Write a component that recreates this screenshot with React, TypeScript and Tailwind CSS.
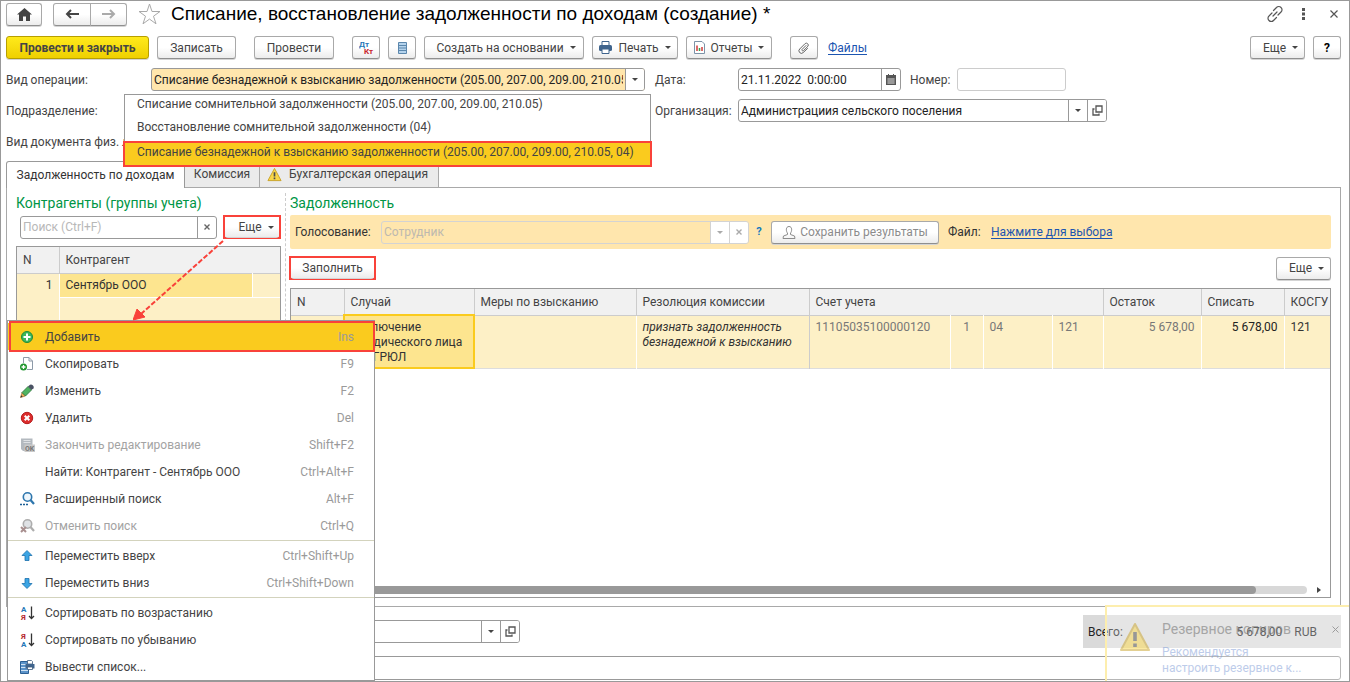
import type { ReactNode } from 'react'

const menuGroups = [
  [
    { icon: 'add', label: 'Добавить', keys: 'Ins', active: true },
    { icon: 'copy', label: 'Скопировать', keys: 'F9' },
    { icon: 'edit', label: 'Изменить', keys: 'F2' },
    { icon: 'delete', label: 'Удалить', keys: 'Del' },
    { icon: 'finish', label: 'Закончить редактирование', keys: 'Shift+F2', disabled: true },
    { icon: '', label: 'Найти: Контрагент - Сентябрь ООО', keys: 'Ctrl+Alt+F' },
    { icon: 'search', label: 'Расширенный поиск', keys: 'Alt+F' },
    { icon: 'cancel', label: 'Отменить поиск', keys: 'Ctrl+Q', disabled: true }
  ],
  [
    { icon: 'up', label: 'Переместить вверх', keys: 'Ctrl+Shift+Up' },
    { icon: 'down', label: 'Переместить вниз', keys: 'Ctrl+Shift+Down' }
  ],
  [
    { icon: 'asc', label: 'Сортировать по возрастанию', keys: '' },
    { icon: 'desc', label: 'Сортировать по убыванию', keys: '' },
    { icon: 'print', label: 'Вывести список...', keys: '' }
  ]
]

const arrowUp = 'M8 2.5 13 7.500h-3v5h-4V7.500H3z'

function MenuIcon({ name }: { name: string }) {
  return (
    <svg width="16" height="16" viewBox="0 0 16 16" fill="none" className="shrink-0">
      {name === 'add' && (
        <>
          <circle cx="8" cy="8" r="5.500" fill="#3cb85c" stroke="#1f8a3a" />
          <path d="M8 4.500v7M4.500 8h7" stroke="#fff" strokeWidth="2" />
        </>
      )}
      {name === 'copy' && (
        <>
          <path d="M4.500 7V1.500h5.500L13.500 5v8.500H8" fill="#fff" stroke="#8d9aa8" />
          <path d="M10 1.500V5h3.500" stroke="#8d9aa8" />
          <circle cx="4.500" cy="11" r="3.500" fill="#21962f" />
          <path d="M4.500 9v4M2.500 11h4" stroke="#fff" strokeWidth="1.300" />
        </>
      )}
      {name === 'edit' && (
        <>
          <path d="M1.500 14.500 3 9.500l3.500 3.500z" fill="#efab55" stroke="#8f5a23" strokeWidth=".6" />
          <path d="M3 9.500 9 3.500l3.500 3.500-6 6z" fill="#4fb360" stroke="#2c6e3a" strokeWidth=".8" />
          <path d="M9 3.500 11 1.700q1.500-.7 3 .8t.5 2.700l-2 1.800z" fill="#4a5263" />
          <path d="M1.500 14.500l.7-2.200 1.500 1.500z" fill="#333" />
        </>
      )}
      {name === 'delete' && (
        <>
          <circle cx="8" cy="8" r="5.700" fill="#dc2c2c" stroke="#b51d1d" />
          <path d="M5.700 5.700l4.600 4.600M10.300 5.700l-4.600 4.600" stroke="#fff" strokeWidth="2" />
        </>
      )}
      {name === 'finish' && (
        <>
          <path d="M2 1.500h11.500V14H4L2 12z" fill="#b3b9bf" />
          <path d="M4.500 3.500h7M4.500 5.500h7" stroke="#dfe2e5" />
          <path d="M5.500 7.500H16V15H5.500z" fill="#c9c9c9" />
          <text x="6" y="14" fontSize="7" fontWeight="700" fill="#777">OK</text>
        </>
      )}
      {name === 'search' && (
        <>
          <circle cx="8.500" cy="6" r="4.200" fill="#eef6fc" stroke="#2d76ad" strokeWidth="1.600" />
          <path d="M11.500 9l3.500 4" stroke="#2d76ad" strokeWidth="2.200" />
          <path d="M1 13.500h8" stroke="#1d5f96" strokeWidth="1.600" strokeDasharray="2 1" />
        </>
      )}
      {name === 'cancel' && (
        <>
          <circle cx="8.500" cy="6" r="4.200" fill="#dfe2e5" stroke="#adadad" strokeWidth="1.600" />
          <path d="M11.500 9l3.500 4" stroke="#adadad" strokeWidth="2.200" />
          <path d="M2 9l5 5M7 9l-5 5" stroke="#a88f8f" strokeWidth="2" />
        </>
      )}
      {name === 'up' && <path d={arrowUp} fill="#3ca5e4" stroke="#1b70ad" strokeWidth=".8" />}
      {name === 'down' && <path d={arrowUp} transform="rotate(180 8 8)" fill="#3ca5e4" stroke="#1b70ad" strokeWidth=".8" />}
      {(name === 'asc' || name === 'desc') && (
        <>
          <text x="2" y="7" fontSize="8" fontWeight="700" fill={name === 'asc' ? '#2777b8' : '#b5292f'}>{name === 'asc' ? 'А' : 'Я'}</text>
          <text x="2" y="15" fontSize="8" fontWeight="700" fill={name === 'asc' ? '#b5292f' : '#2777b8'}>{name === 'asc' ? 'Я' : 'А'}</text>
          <path d="M12.500 1.500v12M10 11l2.500 2.500L15 11" stroke="#333" strokeWidth="1.300" />
        </>
      )}
      {name === 'print' && (
        <>
          <path d="M1.500 2.500h8v12h-8z" fill="#5b93c9" stroke="#2b5f94" />
          <path d="M2 5.500h7M2 8.500h7M2 11.500h7" stroke="#cfe2f3" />
          <path d="M8.500 1.500h4l1 1V5h-5z" fill="#fff" stroke="#3c5a7c" strokeWidth=".8" />
          <path d="M6.500 5h9v4.500h-9z" fill="#3f648d" />
          <path d="M8.500 8h5v2.500h-5z" fill="#fff" stroke="#3c5a7c" strokeWidth=".8" />
        </>
      )}
    </svg>
  )
}

function Caret() {
  return <span className="h-0 w-0 shrink-0 border-x-[3px] border-t-[3px] border-x-transparent border-t-current" />
}

function OpenIcon() {
  return (
    <svg width="11" height="11" viewBox="0 0 11 11" fill="none" stroke="#555" strokeWidth="1.300">
      <path d="M4 1h6v6H4z" />
      <path d="M2.500 4H1v6h6V8.500" />
    </svg>
  )
}

function Warning({ size }: { size: number }) {
  return (
    <svg width={size} height={size} viewBox="0 0 16 16" className="shrink-0">
      <path d="M8 1.500 15 14.500H1z" fill="#f9d648" stroke="#c9a227" strokeLinejoin="round" />
      <path d="M8 5.500v4.500M8 11.300v1.700" stroke="#4b4b4b" strokeWidth="1.800" />
    </svg>
  )
}

function Btn({ children, className = '', label }: { children: ReactNode; className?: string; label?: string }) {
  return (
    <button
      aria-label={label}
      className={`flex h-[23px] shrink-0 items-center justify-center rounded-[3px] border border-[#a9a9a9] border-b-[#8f8f8f] bg-gradient-to-b from-white from-50% to-[#ececec] whitespace-nowrap shadow-[0_1px_0_#d4d4d4] ${className}`}
    >
      {children}
    </button>
  )
}

function Combo({ id, value = '', label, open, className = '' }: { id?: string; value?: string; label?: string; open?: boolean; className?: string }) {
  return (
    <div className={`flex h-[23px] overflow-hidden rounded-[3px] border border-[#999] ${className}`}>
      <select id={id} aria-label={label} className="min-w-0 flex-1 appearance-none bg-transparent px-[2px] text-[#222]">
        <option>{value}</option>
      </select>
      <span className="flex w-[19px] items-center justify-center border-l border-[#999] bg-white text-[#444]"><Caret /></span>
      {open && (
        <button aria-label="Открыть" className="flex w-[19px] items-center justify-center border-l border-[#999] bg-white">
          <OpenIcon />
        </button>
      )}
    </div>
  )
}

function ContextMenu() {
  return (
    <div role="menu" className="absolute -left-[10px] top-[73px] z-20 w-[368px] border border-[#999] bg-white pt-[2px]">
      {menuGroups.map((group, i) => (
        <div key={i} className={i > 0 ? 'mt-px border-t border-[#d3d3bd] pt-px' : ''}>
          {group.map((item) => (
            <button
              key={item.label}
              role="menuitem"
              className={`relative flex h-[27px] w-full items-center pr-5 pl-[11px] text-left whitespace-nowrap ${item.active ? 'bg-[#facb1e]' : ''} ${item.disabled ? 'text-[#a3a3a3]' : 'text-[#444]'}`}
            >
              {item.active && <span className="absolute -inset-y-[2px] left-px -right-px border-2 border-[#f9423a]" />}
              <MenuIcon name={item.icon} />
              <span className="ml-[10px] flex-1">{item.label}</span>
              <span className="text-[#9a9a9a]">{item.keys}</span>
            </button>
          ))}
        </div>
      ))}
    </div>
  )
}

function OperationList() {
  return (
    <ul className="absolute -left-[27px] top-[26px] z-20 h-[72px] w-[527px] border border-[#999] bg-white whitespace-nowrap text-[#444]">
      <li className="h-[23px] pl-3 leading-[19px]">Списание сомнительной задолженности (205.00, 207.00, 209.00, 210.05)</li>
      <li className="h-[23px] pl-3 leading-[19px]">Восстановление сомнительной задолженности (04)</li>
      <li className="-mx-[2px] h-[26px] border-2 border-[#f9423a] bg-[#facb1e] pl-3 leading-[19px]">
        Списание безнадежной к взысканию задолженности (205.00, 207.00, 209.00, 210.05, 04)
      </li>
    </ul>
  )
}

function TitleBar() {
  return (
    <div className="flex h-6 items-center">
      <Btn label="Домой" className="w-9">
        <svg width="15" height="13" viewBox="0 0 15 13" fill="#444"><path d="M7.500 0 15 6.500h-2V13H9V8.500H6V13H2V6.500H0z" /></svg>
      </Btn>
      <div className="ml-[11px] flex">
        <Btn label="Назад" className="w-[38px] rounded-r-none">
          <svg width="14" height="10" viewBox="0 0 14 10" fill="none" stroke="#444" strokeWidth="2"><path d="M14 5H2M6 1 2 5l4 4" /></svg>
        </Btn>
        <Btn label="Вперед" className="-ml-px w-[37px] rounded-l-none">
          <svg width="14" height="10" viewBox="0 0 14 10" fill="none" stroke="#aaa" strokeWidth="2"><path d="M0 5h12M8 1l4 4-4 4" /></svg>
        </Btn>
      </div>
      <button aria-label="В избранное" className="ml-[11px]">
        <svg width="23" height="22" viewBox="0 0 23 22" fill="#fff" stroke="#a9a9a9"><path d="M11.500 1 14 8.500h8l-6.500 4.700 2.500 7.600-6.500-4.700L5 20.800l2.500-7.600L1 8.500h8z" /></svg>
      </button>
      <h1 className="ml-[10px] flex-1 font-['Liberation_Sans',Arial,sans-serif] text-[19px] whitespace-nowrap text-black">Списание, восстановление задолженности по доходам (создание) *</h1>
      <button aria-label="Ссылка">
        <svg width="18" height="18" viewBox="0 0 18 18" fill="none" stroke="#555" strokeWidth="1.200" strokeLinecap="round">
          <path d="M7.500 5.500 10.500 2.500a3 3 0 0 1 4.500 0 3 3 0 0 1 0 4.500l-3 3M10.500 12.500l-3 3a3 3 0 0 1-4.500 0 3 3 0 0 1 0-4.500l3-3M7 11l4-4" />
        </svg>
      </button>
      <button aria-label="Меню" className="ml-[18px] w-[7px]">
        <svg width="4" height="12" viewBox="0 0 4 12" fill="#555"><path d="M0 0h3v3H0zM0 4.500h3v3H0zM0 9h3v3H0z" /></svg>
      </button>
      <button aria-label="Закрыть" className="mr-[3px] ml-[21px]">
        <svg width="8" height="8" viewBox="0 0 8 8" stroke="#555" strokeWidth="1.200"><path d="M.5.5l7 7M7.500.5l-7 7" /></svg>
      </button>
    </div>
  )
}

function Toolbar() {
  return (
    <div className="mt-[10px] flex items-center gap-2">
      <button className="h-[23px] w-[143px] shrink-0 rounded-[3px] border border-[#b79f00] bg-gradient-to-b from-[#ffea1a] to-[#efd000] font-bold whitespace-nowrap text-[#444] shadow-[0_1px_0_#d4d4d4]">
        Провести и закрыть
      </button>
      <Btn className="w-[79px]">Записать</Btn>
      <Btn className="ml-[10px] w-[80px]">Провести</Btn>
      <Btn label="Дебет и кредит" className="ml-[10px] w-7">
        <svg width="15" height="16" viewBox="0 0 15 16" fontSize="8" fontWeight="700">
          <text x="0" y="7" fill="#2777b8">Дт</text>
          <text x="5" y="14" fill="#c8232c">Кт</text>
        </svg>
      </Btn>
      <Btn label="Список" className="w-7">
        <svg width="9" height="12" viewBox="0 0 9 12" fill="#b5d3ec" stroke="#5b87ad"><path d="M.5.5h8v11h-8zM1 3.500h7M1 6h7M1 8.500h7" /></svg>
      </Btn>
      <Btn className="w-40 gap-[6px] pl-1">Создать на основании <Caret /></Btn>
      <Btn className="w-[86px] gap-[6px]">
        <svg width="13" height="13" viewBox="0 0 13 13" fill="#3f648d"><path d="M3 .5h7v4H3z" fill="#fff" stroke="#3f648d" /><rect y="4" width="13" height="6" rx="1.500" /><path d="M3 8h7v4.500H3z" fill="#fff" stroke="#3f648d" /></svg>
        Печать <Caret />
      </Btn>
      <Btn className="w-[86px] gap-[6px]">
        <svg width="11" height="13" viewBox="0 0 11 13" fill="none"><path d="M.5.5H8L10.500 3v9.500H.5z" fill="#fff" stroke="#7d93a8" /><path d="M3 10V4.500M8 10V6" stroke="#d23b3b" strokeWidth="1.500" /><path d="M5.500 10V7" stroke="#38a04b" strokeWidth="1.500" /></svg>
        Отчеты <Caret />
      </Btn>
      <Btn label="Вложения" className="ml-[10px] w-7">
        <svg width="12" height="12" viewBox="0 0 12 12" fill="none" stroke="#666" strokeLinecap="round"><path d="M8 3.500 4 7.500a1 1 0 0 0 1.300 1.300L10 4.200A2 2 0 0 0 7.200 1.500L1.700 7a2.500 2.500 0 0 0 3.500 3.600L9.500 6.500" /></svg>
      </Btn>
      <a href="#" className="ml-[2px] text-[#1c55b0] underline underline-offset-2">Файлы</a>
      <Btn className="ml-auto w-[55px] gap-[6px] pl-[6px]">Еще <Caret /></Btn>
      <Btn className="w-7 font-bold text-black" label="Справка">?</Btn>
    </div>
  )
}

function Fields() {
  return (
    <div className="mt-[9px] space-y-2">
      <div className="flex items-center">
        <label htmlFor="operation" className="w-[145px] shrink-0">Вид операции:</label>
        <div className="relative w-[494px]">
          <Combo id="operation" value="Списание безнадежной к взысканию задолженности (205.00, 207.00, 209.00, 210.05, 04)" className="bg-[#ffe6ad]" />
          <OperationList />
        </div>
        <label htmlFor="date" className="ml-[10px] w-[83px]">Дата:</label>
        <div className="flex h-[23px] w-[163px] overflow-hidden rounded-[3px] border border-[#999]">
          <input id="date" defaultValue="21.11.2022  0:00:00" className="min-w-0 flex-1 px-[2px] text-[#222]" />
          <button aria-label="Календарь" className="flex w-[19px] items-center justify-center border-l border-[#999]">
            <svg width="10" height="11" viewBox="0 0 10 11" fill="#555"><path d="M0 1h2V0h1v1h4V0h1v1h2v10H0z" /><path d="M1 5h8M1 7h8M1 9h8M3 4v6M5 4v6M7 4v6" stroke="#ddd" strokeWidth=".6" /></svg>
          </button>
        </div>
        <label htmlFor="number" className="ml-[9px] w-[47px]">Номер:</label>
        <input id="number" className="h-[23px] w-[109px] rounded-[3px] border border-[#ccc] px-1" />
      </div>
      <div className="flex items-center">
        <label htmlFor="department" className="w-[145px] shrink-0">Подразделение:</label>
        <Combo id="department" className="w-[494px]" />
        <label htmlFor="org" className="ml-[10px] w-[83px]">Организация:</label>
        <Combo id="org" value="Администрациия сельского поселения" open className="w-[369px]" />
      </div>
      <div className="flex items-center">
        <label htmlFor="doc" className="w-[145px] shrink-0 whitespace-nowrap">Вид документа физ. лица:</label>
        <Combo id="doc" className="w-[494px]" />
      </div>
    </div>
  )
}

function Contractors() {
  return (
    <section className="flex w-[265px] shrink-0 flex-col">
      <h2 className="h-5 text-[14px] leading-5 text-[#009646]">Контрагенты (группы учета)</h2>
      <div className="mt-[2px] flex items-center">
        <div className="ml-1 flex h-[23px] w-[197px] overflow-hidden rounded-[3px] border border-[#999]">
          <input aria-label="Поиск" placeholder="Поиск (Ctrl+F)" className="min-w-0 flex-1 px-[2px] placeholder:text-[#b8b8b8]" />
          <button aria-label="Очистить" className="flex w-[19px] items-center justify-center border-l border-[#999]">
            <svg width="6" height="6" viewBox="0 0 6 6" stroke="#666" strokeWidth="1.400"><path d="M.5.5l5 5M5.500.5l-5 5" /></svg>
          </button>
        </div>
        <div className="ml-auto border-2 border-[#f9423a]">
          <Btn className="h-5! w-[54px] gap-[6px] border-0! pl-2">Еще <Caret /></Btn>
        </div>
      </div>
      <div className="relative mt-[7px] flex-1 border border-[#999]">
        <table className="w-full table-fixed border-collapse text-left">
          <thead>
            <tr className="h-[26px] border-b border-[#ccc] bg-[#f1f1f1]">
              <th className="w-[42px] border-r border-[#ccc] pl-[6px] font-normal">N</th>
              <th className="pl-[6px] font-normal">Контрагент</th>
              <th className="w-[28px]" />
            </tr>
          </thead>
          <tbody className="text-[#333]">
            <tr className="h-6 bg-[#fdf0c6]">
              <td className="border-r border-white pr-[6px] text-right">1</td>
              <td className="border-r border-b border-white bg-[#fde58f] pl-[6px]">Сентябрь ООО</td>
              <td className="border-b border-white" />
            </tr>
            <tr className="h-6 bg-[#fdf0c6]">
              <td className="border-r border-white" />
              <td colSpan={2} />
            </tr>
          </tbody>
        </table>
        <svg width="92" height="82" viewBox="0 0 92 82" className="absolute top-[-8px] left-[116px] z-30">
          <path d="M90 2 8 75" stroke="#f9423a" strokeWidth="2" strokeDasharray="5 2" />
          <path d="M0 81 4 70l8 8z" fill="#f9423a" stroke="#f9423a" />
        </svg>
        <ContextMenu />
      </div>
    </section>
  )
}

function Debt() {
  const head = 'overflow-hidden border-r border-[#ccc] pl-[6px] font-normal whitespace-nowrap'
  const cell = 'border-r border-white px-[6px] pt-1 text-[#777]'
  return (
    <section className="flex min-w-0 flex-1 flex-col">
      <h2 className="h-5 text-[14px] leading-5 text-[#009646]">Задолженность</h2>
      <div className="mt-[2px] flex h-[34px] items-center rounded-[2px] bg-[#ffe6ad] pl-[5px] text-[#333]">
        <label htmlFor="employee" className="w-[86px]">Голосование:</label>
        <div className="flex h-[23px] w-[368px] overflow-hidden rounded-[3px] border border-[#d3d3d3]">
          <select id="employee" disabled className="min-w-0 flex-1 appearance-none px-[2px] text-[#bdb9b0] opacity-100">
            <option>Сотрудник</option>
          </select>
          <span className="flex w-[19px] items-center justify-center border-l border-[#d3d3d3] bg-white text-[#aaa]"><Caret /></span>
          <button disabled aria-label="Очистить" className="flex w-[19px] items-center justify-center border-l border-[#d3d3d3] bg-white">
            <svg width="6" height="6" viewBox="0 0 6 6" stroke="#aaa" strokeWidth="1.400"><path d="M.5.5l5 5M5.500.5l-5 5" /></svg>
          </button>
        </div>
        <button className="ml-[6px] w-2 text-[11px] font-bold text-[#1279bf]">?</button>
        <Btn className="ml-2 w-[168px] gap-1 text-[#8c8c8c]">
          <svg width="14" height="13" viewBox="0 0 14 13" fill="none" stroke="#8c8c8c"><path d="M5.500 7C4 5.500 3.500.5 7 .5S10 5.500 8.500 7v1.500l4 1.500.5 2.500H1L1.500 10l4-1.500z" /></svg>
          Сохранить результаты
        </Btn>
        <span className="ml-[9px] w-[43px]">Файл:</span>
        <a href="#" className="text-[#1c55b0] underline underline-offset-2">Нажмите для выбора</a>
      </div>
      <div className="mt-[7px] flex items-center justify-between">
        <div className="-ml-px border-2 border-[#f9423a]">
          <Btn className="h-5! w-[83px] border-0!">Заполнить</Btn>
        </div>
        <Btn className="w-[55px] gap-[6px] pl-[6px]">Еще <Caret /></Btn>
      </div>
      <div className="mt-2 flex flex-1 flex-col overflow-hidden border border-[#999]">
        <table className="w-full table-fixed border-collapse text-left">
          <colgroup>
            <col className="w-[53px]" />
            <col className="w-[130px]" />
            <col className="w-[162px]" />
            <col className="w-[173px]" />
            <col className="w-[141px]" />
            <col className="w-[33px]" />
            <col className="w-[69px]" />
            <col className="w-[51px]" />
            <col className="w-[98px]" />
            <col className="w-[83px]" />
            <col />
          </colgroup>
          <thead>
            <tr className="h-[26px] border-b border-[#ccc] bg-[#f1f1f1]">
              <th className={head}>N</th>
              <th className={head}>Случай</th>
              <th className={head}>Меры по взысканию</th>
              <th className={head}>Резолюция комиссии</th>
              <th className={head} colSpan={4}>Счет учета</th>
              <th className={head}>Остаток</th>
              <th className={head}>Списать</th>
              <th className="overflow-hidden pl-[6px] font-normal whitespace-nowrap">КОСГУ</th>
            </tr>
          </thead>
          <tbody className="leading-[15px] text-[#333]">
            <tr className="h-[53px] border-b border-[#ddd] bg-[#fdf0c6] align-top">
              <td className={cell}>1</td>
              <td className="border-2 border-[#facb1e] bg-[#fde58f] pt-1 pl-[5px]">
                Исключение<br />юридического лица<br />из ЕГРЮЛ
              </td>
              <td className={cell} />
              <td className="border-r border-[#ccc] pt-1 pl-[6px] whitespace-nowrap italic">признать задолженность<br />безнадежной к взысканию</td>
              <td className={cell}>11105035100000120</td>
              <td className={`${cell} text-center`}>1</td>
              <td className={cell}>04</td>
              <td className={cell}>121</td>
              <td className={`${cell} text-right`}>5 678,00</td>
              <td className="border-r border-white pt-1 pr-[6px] text-right text-[#222]">5 678,00</td>
              <td className="pt-1 pl-[6px]">121</td>
            </tr>
          </tbody>
        </table>
        <div className="mt-auto mb-[3px] flex items-center pr-[9px]">
          <div className="h-2 flex-1 rounded-full bg-[#d8d8d8]">
            <div className="h-2 w-[95%] rounded-full bg-[#999]" />
          </div>
          <span className="ml-[10px] h-0 w-0 border-y-[3px] border-l-4 border-y-transparent border-l-[#444]" />
        </div>
      </div>
    </section>
  )
}

export default function App() {
  return (
    <div className="relative flex min-h-screen flex-col overflow-hidden border border-[#999] bg-white pt-px pr-2 pb-px pl-[5px] font-[Roboto,'Liberation_Sans',sans-serif] text-[12px] leading-4 text-[#444]">
      <TitleBar />
      <Toolbar />
      <Fields />
      <div role="tablist" className="relative z-10 mt-2 -mb-px flex h-[27px]">
        <button role="tab" aria-selected="true" className="w-[179px] rounded-tl-[3px] border border-b-0 border-[#999] bg-white whitespace-nowrap text-[#333]">
          Задолженность по доходам
        </button>
        <button role="tab" className="w-[75px] border-r border-b border-[#a9a9a9] bg-[#ebebeb]">Комиссия</button>
        <button role="tab" className="flex w-[179px] items-center border-r border-b border-[#a9a9a9] bg-[#ebebeb] pl-[7px] whitespace-nowrap">
          <Warning size={15} />
          <span className="ml-[7px]">Бухгалтерская операция</span>
        </button>
      </div>
      <main className="flex flex-1 border border-[#a9a9a9] px-[9px] pt-[5px] pb-2">
        <Contractors />
        <div className="mx-1 w-px border-l border-dashed border-[#ccc]" />
        <Debt />
      </main>
      <div className="my-2 flex h-[33px] items-center justify-between">
        <Combo label="Ответственный" open className="ml-[145px] w-[369px]" />
        <div className="flex h-full w-[258px] items-center bg-[#dadada] pl-[5px] text-[#222]">
          <span className="flex-1">Всего:</span>
          <span>5 678,00</span>
          <span className="mr-6 ml-3">RUB</span>
        </div>
      </div>
      <input aria-label="Комментарий" className="ml-[145px] h-6 rounded-[3px] border border-[#999] px-1" />

      <aside className="absolute right-0 bottom-0 z-10 h-[76px] w-[244px] border-t-2 border-l-2 border-[#fdeeae] bg-white/30">
        <div className="flex items-start pt-3 pl-3 opacity-50">
          <div className="mt-[2px]"><Warning size={32} /></div>
          <div className="ml-[11px] flex-1">
            <p className="text-[14px] leading-5 text-[#666]">Резервное копиров</p>
            <a href="#" className="mt-[5px] block leading-4 text-[#7d9ad6]">Рекомендуется<br />настроить резервное к...</a>
          </div>
          <button aria-label="Закрыть уведомление" className="mt-[7px] mr-[10px]">
            <svg width="7" height="7" viewBox="0 0 7 7" stroke="#555"><path d="M.5.5l6 6M6.500.5l-6 6" /></svg>
          </button>
        </div>
      </aside>
    </div>
  )
}
